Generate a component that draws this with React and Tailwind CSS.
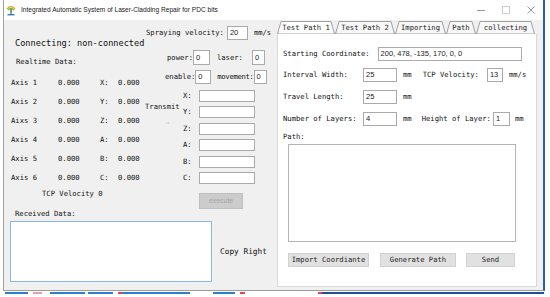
import React from 'react';

const mono = "font-['DejaVu_Sans_Mono',monospace]";
const sans = "font-['Liberation_Sans',Arial,sans-serif]";

const Field = ({ className = '', children }) => (
  <div className={`bg-white border border-[#aaaaaa] flex items-center pl-[2px] text-[7.5px] text-[#222] ${sans} ${className}`}>
    {children}
  </div>
);

const axes = [
  { name: 'Axis 1', k: 'X:' },
  { name: 'Axis 2', k: 'Y:' },
  { name: 'Aixs 3', k: 'Z:' },
  { name: 'Axis 4', k: 'A:' },
  { name: 'Axis 5', k: 'B:' },
  { name: 'Axis 6', k: 'C:' },
];

const tabs = [
  { label: 'Test Path 1', w: 58, cls: 'w-[58px]', active: true },
  { label: 'Test Path 2', w: 60, cls: 'w-[60px]' },
  { label: 'Importing', w: 51, cls: 'w-[51px]' },
  { label: 'Path', w: 30, cls: 'w-[30px]' },
  { label: 'collecting', w: 59, cls: 'w-[59px]' },
];

const TitleBar = () => (
  <div className="h-[20px] bg-white flex items-center">
    {/* app icon */}
    <svg width="10" height="11" viewBox="0 0 10 11" className="ml-[2px]">
      <path d="M1 4 Q5 -1 9 4" stroke="#e0b020" strokeWidth="1.6" fill="none" />
      <path d="M2 5 Q5 2 8 5" stroke="#7cb342" strokeWidth="1.2" fill="none" />
      <rect x="4.3" y="4" width="1.4" height="5" fill="#3a8a3a" />
      <rect x="1.5" y="9" width="7" height="1.4" fill="#3b78c4" />
    </svg>
    <span className={`ml-[5px] text-[6.6px] text-[#222] ${sans}`}>
      Integrated Automatic System of Laser-Cladding Repair for PDC bits
    </span>
    <div className="ml-auto flex h-full">
      <div className="w-[25px] flex items-center justify-center">
        <svg width="8" height="8"><line x1="0" y1="4.5" x2="8" y2="4.5" stroke="#9a9a9a" strokeWidth="1" /></svg>
      </div>
      <div className="w-[25px] flex items-center justify-center">
        <svg width="8" height="8"><rect x="0.5" y="0.5" width="7" height="7" fill="none" stroke="#d0d0d0" strokeWidth="1" /></svg>
      </div>
      <div className="w-[25px] flex items-center justify-center">
        <svg width="8" height="8"><path d="M0.5 0.5 L7.5 7.5 M7.5 0.5 L0.5 7.5" stroke="#9a9a9a" strokeWidth="1" /></svg>
      </div>
    </div>
  </div>
);

const LeftPanel = () => (
  <div className="w-[273px] flex flex-col text-[7.2px] leading-[10px]">
    <div className="flex h-[189px]">
      {/* status and realtime data */}
      <div className="w-[140px] flex flex-col whitespace-nowrap">
        <div className="mt-[18px] pl-[11px] text-[8.6px] leading-[10px]">Connecting: non-connected</div>
        <div className="mt-[9px] pl-[12px]">Realtime Data:</div>
        <div className="mt-[6px] pl-[7px] grid grid-cols-[47px_42px_18px_1fr] auto-rows-[19px] items-center">
          {axes.map((a) => (
            <React.Fragment key={a.name}>
              <span>{a.name}</span>
              <span>0.000</span>
              <span>{a.k}</span>
              <span>0.000</span>
            </React.Fragment>
          ))}
        </div>
        <div className="mt-[2px] pl-[38px]">TCP Velocity 0</div>
      </div>

      {/* settings and transmit */}
      <div className="flex-1 flex flex-col whitespace-nowrap">
        <div className="mt-[6px] h-[14px] flex items-center pl-[2px]">
          <span>Spraying velocity:</span>
          <Field className="ml-[3px] w-[21px] h-[14px]">20</Field>
          <span className="ml-[6px]">mm/s</span>
        </div>
        <div className="mt-[10px] h-[15px] flex items-center pl-[23px]">
          <span>power:</span>
          <Field className="w-[17px] h-[15px]">0</Field>
          <span className="ml-[7px]">laser:</span>
          <Field className="ml-[9px] w-[13px] h-[15px]">0</Field>
        </div>
        <div className="mt-[5px] h-[14px] flex items-center pl-[21px]">
          <span>enable:</span>
          <Field className="w-[16px] h-[14px]">0</Field>
          <span className="ml-[6px] tracking-[-0.3px]">movement:</span>
          <Field className="w-[13px] h-[14px]">0</Field>
        </div>
        <div className="mt-[6px] flex">
          <div className="w-[38px] flex flex-col">
            <span className="mt-[12px] pl-[1px]">Transmit</span>
            <span className="mt-[6px] pl-[21px] text-[#c4c4c4]">→</span>
          </div>
          <div className="flex flex-col gap-[4.4px]">
            {['X:', 'Y:', 'Z:', 'A:', 'B:', 'C:'].map((k) => (
              <div key={k} className="h-[12px] flex items-center">
                <span className="w-[16px] pl-[1px]">{k}</span>
                <Field className="ml-[1px] w-[56px] h-[12px]" />
              </div>
            ))}
          </div>
        </div>
        <div className={`mt-[9px] ml-[55px] w-[44px] h-[16px] bg-[#cccccc] border border-[#bfbfbf] text-[#a6a6a6] text-[7px] flex items-center justify-center ${sans}`}>
          execute
        </div>
      </div>
    </div>

    <div className="pl-[11px]">Received Data:</div>
    <div className="mt-[2px] flex items-center">
      <div className="ml-[6px] w-[202px] h-[61px] bg-white border border-[#86b8e8]" />
      <span className="ml-[8px] text-[7.8px]">Copy Right</span>
    </div>
  </div>
);

const TabStrip = () => (
  <div className="mt-[1px] h-[13px] flex">
    {tabs.map((t) => (
      <div key={t.label} className={`relative h-[13px] flex items-center justify-center ${t.cls}`}>
        <svg width={t.w} height="13" className="absolute inset-0">
          <polygon
            points={`0.5,13 4,0.5 ${t.w - 4},0.5 ${t.w - 0.5},13`}
            fill={t.active ? '#ffffff' : '#f7f7f7'}
            stroke="#8c8c8c"
            strokeWidth="0.8"
          />
        </svg>
        <span className="relative text-[7.2px] leading-[10px] text-[#222]">{t.label}</span>
      </div>
    ))}
  </div>
);

const Btn = ({ className = '', children }) => (
  <div className={`h-[14px] bg-[#e1e1e1] border border-[#d2d2d2] flex items-center justify-center text-[7.2px] text-[#222] ${className}`}>
    {children}
  </div>
);

const RightPanel = () => (
  <div className="w-[260px] flex flex-col">
    <TabStrip />
    <div className="flex-1 mb-[3px] bg-white border border-[#d9d9d9] border-t-0 pl-[5px] flex flex-col text-[7.2px] leading-[10px] whitespace-nowrap">
      <div className="mt-[13px] h-[14px] flex items-center">
        <span>Starting Coordinate:</span>
        <Field className="ml-[8px] w-[144px] h-[14px]">200, 478, -135, 170, 0, 0</Field>
      </div>
      <div className="mt-[7px] h-[14px] flex items-center">
        <span className="w-[80px]">Interval Width:</span>
        <Field className="w-[34px] h-[14px]">25</Field>
        <span className="ml-[6px]">mm</span>
        <span className="ml-[11px]">TCP Velocity:</span>
        <Field className="ml-[8px] w-[16px] h-[14px]">13</Field>
        <span className="ml-[6px]">mm/s</span>
      </div>
      <div className="mt-[8px] h-[14px] flex items-center">
        <span className="w-[80px]">Travel Length:</span>
        <Field className="w-[34px] h-[14px]">25</Field>
        <span className="ml-[6px]">mm</span>
      </div>
      <div className="mt-[8px] h-[14px] flex items-center">
        <span className="w-[80px]">Number of Layers:</span>
        <Field className="w-[34px] h-[14px]">4</Field>
        <span className="ml-[6px]">mm</span>
        <span className="ml-[10px]">Height of Layer:</span>
        <Field className="ml-[2px] w-[17px] h-[14px]">1</Field>
        <span className="ml-[5px]">mm</span>
      </div>
      <div className="mt-[6px]">Path:</div>
      <div className="mt-[2px] ml-[5px] w-[228px] h-[98px] bg-white border border-[#b4b4b4]" />
      <div className="mt-[11px] flex">
        <Btn className="ml-[5px] w-[81px]">Import Coordiante</Btn>
        <Btn className="ml-[11px] w-[76px]">Generate Path</Btn>
        <Btn className="ml-[10px] w-[49px]">Send</Btn>
      </div>
    </div>
  </div>
);

const Taskbar = () => (
  <div className="mt-[1px] h-[2px] flex">
    <div className="ml-[5px] w-[23px] bg-[#2a7fd0]" />
    <div className="ml-[5px] w-[9px] bg-[#e8a0a8]" />
    <div className="ml-[8px] w-[35px] bg-[#2a7fd0]" />
    <div className="ml-[3px] w-[25px] bg-[#2a7fd0]" />
    <div className="ml-[5px] w-[4px] bg-[#e04848]" />
    <div className="w-[68px] bg-[#2a7fd0]" />
    <div className="ml-[23px] w-[22px] bg-[#2a7fd0]" />
    <div className="ml-[5px] w-[5px] bg-[#e04848]" />
    <div className="ml-[73px] w-[4px] bg-[#e04848]" />
    <div className="w-[222px] bg-[#1f4f9c]" />
  </div>
);

export default function App() {
  return (
    <div className={`w-[550px] h-[297px] bg-white overflow-hidden text-[#111] ${mono}`}>
      <div className="ml-[3px] w-[542px] h-[291px] border-l border-[#a0a0a0] border-r-2 border-r-[#2a5fa8] border-b border-b-[#9c9c9c] flex flex-col">
        <TitleBar />
        <div className="flex-1 bg-[#f0f0f0] flex">
          <LeftPanel />
          <RightPanel />
        </div>
      </div>
      <Taskbar />
    </div>
  );
}
